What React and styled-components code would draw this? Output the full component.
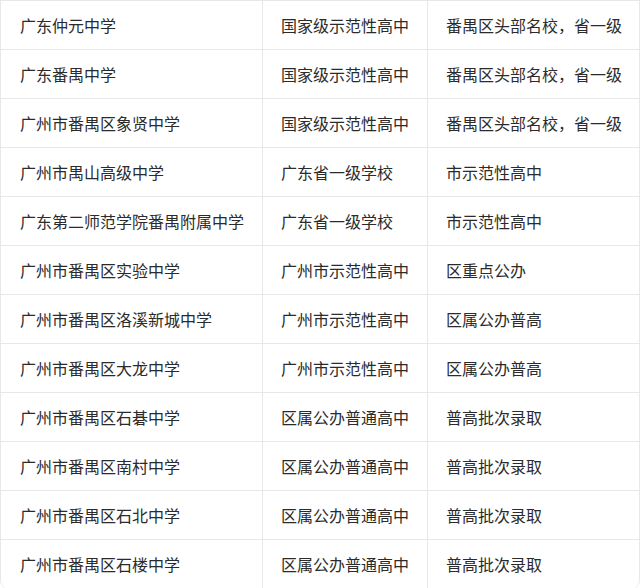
import React from 'react';
import styled, { createGlobalStyle } from 'styled-components';

const rows = [
  ['广东仲元中学', '国家级示范性高中', '番禺区头部名校，省一级'],
  ['广东番禺中学', '国家级示范性高中', '番禺区头部名校，省一级'],
  ['广州市番禺区象贤中学', '国家级示范性高中', '番禺区头部名校，省一级'],
  ['广州市禺山高级中学', '广东省一级学校', '市示范性高中'],
  ['广东第二师范学院番禺附属中学', '广东省一级学校', '市示范性高中'],
  ['广州市番禺区实验中学', '广州市示范性高中', '区重点公办'],
  ['广州市番禺区洛溪新城中学', '广州市示范性高中', '区属公办普高'],
  ['广州市番禺区大龙中学', '广州市示范性高中', '区属公办普高'],
  ['广州市番禺区石碁中学', '区属公办普通高中', '普高批次录取'],
  ['广州市番禺区南村中学', '区属公办普通高中', '普高批次录取'],
  ['广州市番禺区石北中学', '区属公办普通高中', '普高批次录取'],
  ['广州市番禺区石楼中学', '区属公办普通高中', '普高批次录取'],
];

const GlobalStyle = createGlobalStyle`
  html, body {
    margin: 0;
    padding: 0;
    background: #ffffff;
  }
`;

const TableWrap = styled.div`
  width: 640px;
  box-sizing: border-box;
  border: 1px solid #e8e8e8;
  border-bottom: none;
  border-radius: 0 0 10px 10px;
  overflow: hidden;
  font-family: "Noto Sans CJK SC", "Noto Sans", sans-serif;
`;

const Row = styled.div`
  display: grid;
  grid-template-columns: 261px 165px 1fr;
  height: 49px;
  box-sizing: border-box;
  border-bottom: 1px solid #e8e8e8;

  &:last-child {
    height: 50px;
  }
`;

const Cell = styled.div`
  display: flex;
  align-items: center;
  padding-left: ${(p) => p.$pad}px;
  font-size: 16px;
  color: #2b2b2b;
  white-space: nowrap;
  border-left: ${(p) => (p.$first ? 'none' : '1px solid #e8e8e8')};
  padding-bottom: 1px;
`;

const App = () => (
  <>
    <GlobalStyle />
    <TableWrap>
      {rows.map((r, i) => (
        <Row key={i}>
          <Cell $first $pad={19}>{r[0]}</Cell>
          <Cell $pad={18}>{r[1]}</Cell>
          <Cell $pad={18}>{r[2]}</Cell>
        </Row>
      ))}
    </TableWrap>
  </>
);

export default App;
